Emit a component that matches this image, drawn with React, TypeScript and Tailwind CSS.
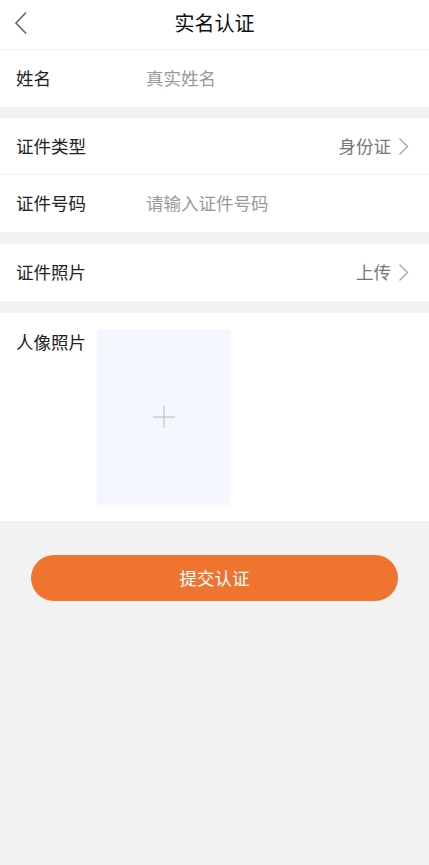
import React from 'react';

const font = { fontFamily: '"Noto Sans CJK SC", "Noto Sans", sans-serif' };

const Chevron = () => (
  <svg width="11" height="19" viewBox="0 0 11 19" fill="none" className="ml-[7px]">
    <path d="M1.5 1.5 L9.5 9.5 L1.5 17.5" stroke="#a6a6a6" strokeWidth="1.4" />
  </svg>
);

const Row = ({ label, children, border }: { label: string; children?: React.ReactNode; border?: boolean }) => (
  <div className={`h-[57px] flex items-center px-4 bg-white ${border ? 'border-b border-[#efefef]' : ''}`}>
    <span className="w-[130px] text-[17.5px] text-[#222]">{label}</span>
    <div className="flex-1 flex items-center">{children}</div>
  </div>
);

export default function App() {
  return (
    <div className="min-h-[865px] bg-[#f2f2f2]" style={font}>
      {/* Header */}
      <div className="h-[50px] bg-white relative flex items-center justify-center border-b border-[#f0f0f0]">
        <svg width="14" height="24" viewBox="0 0 14 24" fill="none" className="absolute left-[14px] top-[11px]">
          <path d="M12 1.5 L2 12 L12 22.5" stroke="#666" strokeWidth="1.6" />
        </svg>
        <span className="text-[20px] text-[#111] -mt-[4px]">实名认证</span>
      </div>

      <Row label="姓名">
        <span className="text-[17.5px] text-[#999]">真实姓名</span>
      </Row>

      <div className="h-[11px]" />

      <Row label="证件类型" border>
        <div className="flex-1 flex justify-end items-center pr-[4px]">
          <span className="text-[17.5px] text-[#777]">身份证</span>
          <Chevron />
        </div>
      </Row>
      <Row label="证件号码">
        <span className="text-[17.5px] text-[#999]">请输入证件号码</span>
      </Row>

      <div className="h-[12px]" />

      <Row label="证件照片">
        <div className="flex-1 flex justify-end items-center pr-[4px]">
          <span className="text-[17.5px] text-[#777]">上传</span>
          <Chevron />
        </div>
      </Row>

      <div className="h-[12px]" />

      <div className="bg-white h-[208px] flex px-4 pt-[16px]">
        <span className="w-[81px] text-[17.5px] text-[#222] leading-[26px]">人像照片</span>
        <div className="w-[133px] h-[175px] bg-[#f5f7ff] flex items-center justify-center shadow-[0_2px_4px_rgba(0,0,0,0.03)]">
          <svg width="22" height="22" viewBox="0 0 22 22" fill="none">
            <path d="M11 0 V22 M0 11 H22" stroke="#bbb" strokeWidth="1" />
          </svg>
        </div>
      </div>

      <div className="px-[31px] pt-[34px]">
        <button className="w-full h-[46px] rounded-full bg-[#ee7430] text-white text-[17.5px]">
          提交认证
        </button>
      </div>
    </div>
  );
}
